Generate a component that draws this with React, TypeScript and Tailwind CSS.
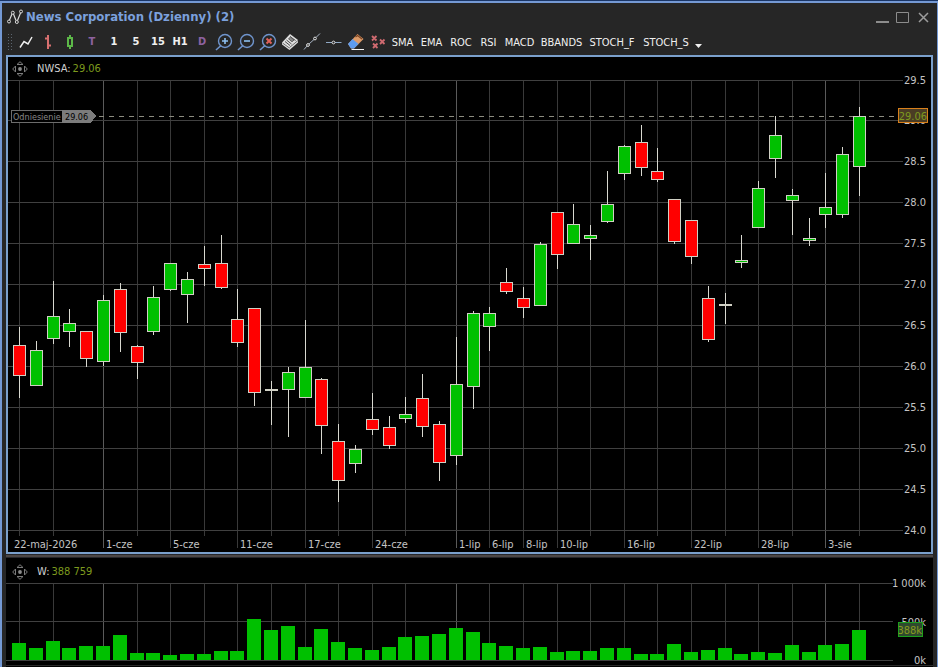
import type { ReactNode } from 'react';

type Dir = 'up' | 'down' | 'flat';
type Candle = [Dir, number, number, number, number];

// direction, high, body top, body bottom, low (screen units, 80 = top grid line)
const candles: Candle[] = [
  ['down', 327, 345, 376, 398],
  ['up', 341, 350, 386, 386],
  ['up', 281, 316, 339, 344],
  ['up', 309, 323, 332, 347],
  ['down', 331, 331, 359, 367],
  ['up', 295, 300, 362, 366],
  ['down', 283, 289, 333, 352],
  ['down', 345, 346, 363, 379],
  ['up', 286, 297, 332, 335],
  ['up', 263, 263, 290, 291],
  ['up', 272, 279, 295, 323],
  ['down', 246, 264, 269, 286],
  ['down', 235, 263, 288, 289],
  ['down', 289, 319, 343, 347],
  ['down', 308, 308, 393, 406],
  ['flat', 381, 389, 391, 425],
  ['up', 367, 372, 390, 437],
  ['up', 320, 367, 398, 398],
  ['down', 378, 379, 426, 454],
  ['down', 424, 441, 481, 502],
  ['up', 445, 449, 464, 473],
  ['down', 393, 419, 430, 435],
  ['down', 416, 427, 446, 449],
  ['up', 397, 414, 419, 423],
  ['down', 374, 398, 427, 437],
  ['down', 421, 424, 463, 481],
  ['up', 337, 384, 456, 465],
  ['up', 311, 313, 387, 409],
  ['up', 307, 313, 327, 351],
  ['down', 268, 282, 292, 294],
  ['down', 287, 298, 308, 318],
  ['up', 242, 244, 306, 306],
  ['down', 212, 212, 255, 269],
  ['up', 204, 224, 244, 244],
  ['up', 225, 235, 239, 260],
  ['up', 171, 204, 222, 223],
  ['up', 145, 146, 174, 180],
  ['down', 125, 142, 168, 176],
  ['down', 148, 171, 180, 182],
  ['down', 199, 199, 242, 244],
  ['down', 220, 220, 257, 264],
  ['down', 286, 298, 340, 342],
  ['flat', 293, 304, 306, 324],
  ['up', 235, 260, 263, 268],
  ['up', 181, 188, 228, 228],
  ['up', 116, 135, 159, 178],
  ['up', 189, 195, 201, 235],
  ['up', 218, 238, 241, 246],
  ['up', 173, 207, 215, 228],
  ['up', 147, 154, 215, 218],
  ['up', 107, 116, 167, 196],
];

const volumes = [
  17, 12, 19, 12, 14, 14, 25, 7, 7, 5, 6, 6, 9, 9, 41, 30, 34, 13, 31, 18, 12, 10, 13, 23, 24, 26,
  32, 28, 17, 14, 12, 13, 8, 9, 9, 12, 12, 6, 6, 16, 8, 10, 12, 6, 8, 7, 15, 8, 15, 16, 30,
];

const TOP = 80;
const PITCH = 16.8;

const gridColumns = [0, 2, 5, 7, 9, 11, 13, 15, 17, 19, 21, 23, 26, 28, 30, 32, 34, 36, 38, 40, 42, 44, 46, 48, 50];
const monthStarts = [5, 26, 48];

const dates: Record<number, string> = {
  5: '1-cze',
  9: '5-cze',
  13: '11-cze',
  17: '17-cze',
  21: '24-cze',
  26: '1-lip',
  28: '6-lip',
  30: '8-lip',
  32: '10-lip',
  36: '16-lip',
  40: '22-lip',
  44: '28-lip',
  48: '3-sie',
};

const priceLines = [
  { y: 0, label: '29.5' },
  { y: 40, label: '29.0' },
  { y: 81, label: '28.5' },
  { y: 122, label: '28.0' },
  { y: 163, label: '27.5' },
  { y: 204, label: '27.0' },
  { y: 245, label: '26.5' },
  { y: 286, label: '26.0' },
  { y: 327, label: '25.5' },
  { y: 368, label: '25.0' },
  { y: 409, label: '24.5' },
  { y: 450, label: '24.0' },
];

const fills: Record<Dir, string> = { up: '#00c000', down: '#ff0000', flat: '#c8c8c8' };

const colX = (i: number, origin: number) => origin + Math.round(PITCH * i);

const gridColor = (i: number) => (monthStarts.includes(i) ? '#5a5a5a' : '#393939');

const Glyph = ({ children }: { children: ReactNode }) => (
  <svg width="18" height="18" viewBox="0 0 18 18" fill="none" aria-hidden="true">
    {children}
  </svg>
);

const Lens = ({ children }: { children: ReactNode }) => (
  <Glyph>
    <path d="M6 12.5 1 17" stroke="#6f94cc" strokeWidth="1.6" />
    <circle cx="10" cy="8" r="6.5" stroke="#6f94cc" strokeWidth="1.4" />
    {children}
  </Glyph>
);

const Letter = ({ text, className }: { text: string; className: string }) => (
  <span className={`text-[11px] font-bold ${className}`}>{text}</span>
);

const tools: { name: string; icon: ReactNode }[] = [
  {
    name: 'Line',
    icon: (
      <Glyph>
        <path d="M3 14.5 7 8.5 11 11 15 4" stroke="#f0f0f0" strokeWidth="1.5" />
      </Glyph>
    ),
  },
  {
    name: 'Bars',
    icon: (
      <Glyph>
        <path d="M9 2v14M6 5.5h3M9 12.5h3" stroke="#d87070" strokeWidth="2" />
      </Glyph>
    ),
  },
  {
    name: 'Candles',
    icon: (
      <Glyph>
        <path d="M9 2v3M9 13v3" stroke="#5cb848" strokeWidth="2" />
        <rect x="7" y="5" width="4" height="8" stroke="#5cb848" strokeWidth="2" />
      </Glyph>
    ),
  },
  { name: 'Tick', icon: <Letter text="T" className="text-[#8d62a0]" /> },
  { name: '1 min', icon: <Letter text="1" className="text-[#f0f0f0]" /> },
  { name: '5 min', icon: <Letter text="5" className="text-[#f0f0f0]" /> },
  { name: '15 min', icon: <Letter text="15" className="text-[#f0f0f0]" /> },
  { name: '1 h', icon: <Letter text="H1" className="text-[#f0f0f0]" /> },
  { name: 'Daily', icon: <Letter text="D" className="text-[#8d62a0]" /> },
  {
    name: 'Zoom in',
    icon: (
      <Lens>
        <path d="M10 5v6M7 8h6" stroke="#8fc0f0" strokeWidth="1.6" />
      </Lens>
    ),
  },
  {
    name: 'Zoom out',
    icon: (
      <Lens>
        <path d="M7 8h6" stroke="#8fc0f0" strokeWidth="1.6" />
      </Lens>
    ),
  },
  {
    name: 'Reset zoom',
    icon: (
      <Lens>
        <path d="m7.5 5.5 5 5M12.5 5.500l-5 5" stroke="#e0605a" strokeWidth="2" />
      </Lens>
    ),
  },
  {
    name: 'News',
    icon: (
      <Glyph>
        <path d="M1 9.5 9 1l8 6v2.5L8.500 17 1 11.500Z" fill="#dedede" />
        <path d="M8.500 14.500 17 7.500M1.500 10l7 5" stroke="#6a6a6a" />
        <path d="M9 3.500 14.500 7.500M4 8.500l5 4M5.500 7l5 4" stroke="#4a4a4a" />
        <path d="m7.500 5.800 2-1.800 3.500 3-2 1.800Z" fill="#8a8a8a" stroke="#4a4a4a" strokeWidth=".8" />
      </Glyph>
    ),
  },
  {
    name: 'Trend line',
    icon: (
      <Glyph>
        <path d="M1 16.5 4 13M6 11l5-4.5M13 4.500l4-4" stroke="#a8b4c4" />
        <circle cx="5" cy="12" r="1.4" stroke="#e0e0e0" />
        <circle cx="12" cy="5.5" r="1.4" stroke="#e0e0e0" />
      </Glyph>
    ),
  },
  {
    name: 'Horizontal line',
    icon: (
      <Glyph>
        <path d="M1 9.5h6M10 9.5h6.5" stroke="#8fa8c4" />
        <circle cx="8.5" cy="9.5" r="1.4" stroke="#e0e0e0" />
      </Glyph>
    ),
  },
  {
    name: 'Eraser',
    icon: (
      <Glyph>
        <path d="M10.500 1 16.500 6 7 15.500 4 15.500 1 11Z" fill="#dc9a68" />
        <path d="M5.500 6 11.500 11 7 15.500H4L1 11Z" fill="#5d9cf0" />
        <path d="m8.500 4 2-1.500L15 6" stroke="#7a4424" strokeWidth="1.2" />
        <path d="M4.500 16.500H17" stroke="#f4f4f4" />
      </Glyph>
    ),
  },
  {
    name: 'Delete all',
    icon: (
      <Glyph>
        <path
          d="m3 3 4.500 4.500M7.500 3 3 7.500M11 6.500l4.500 4.500M15.500 6.500 11 11M4 10.500l4.500 4.500M8.500 10.500 4 15"
          stroke="#cf6a70"
          strokeWidth="1.8"
        />
      </Glyph>
    ),
  },
];

const indicators = [
  { name: 'SMA', width: 'w-[21px]' },
  { name: 'EMA', width: 'w-[21px]' },
  { name: 'ROC', width: 'w-[22px]' },
  { name: 'RSI', width: 'w-[17px]' },
  { name: 'MACD', width: 'w-[29px]' },
  { name: 'BBANDS', width: 'w-[39px]' },
  { name: 'STOCH_F', width: 'w-[46px]' },
  { name: 'STOCH_S', width: 'w-[46px]' },
];

const TitleBar = () => (
  <header className="flex h-[26px] items-center pt-[2px] pr-2 pl-[5px]">
    <svg width="17" height="16" viewBox="0 0 17 16" fill="none" stroke="#d8d8d8" aria-hidden="true">
      <path d="M2.5 11 5 5M6.500 5l2.500 6.500M10.500 11.500 13.500 4" strokeWidth="1.2" />
      <circle cx="2" cy="12.5" r="1.5" />
      <circle cx="5.8" cy="3.7" r="1.5" />
      <circle cx="9.8" cy="13" r="1.5" />
      <circle cx="14" cy="2.5" r="1.5" />
    </svg>
    <h1 className="ml-[2px] flex-1 whitespace-nowrap text-[13px] leading-4 font-bold text-[#7ba0dc]">
      News Corporation (Dzienny) (2)
    </h1>
    <div className="flex gap-[7px]">
      <button type="button" aria-label="Minimize">
        <svg width="13" height="13" fill="none" stroke="#8c8c8c" strokeWidth="2">
          <path d="M0 11h13" />
        </svg>
      </button>
      <button type="button" aria-label="Maximize">
        <svg width="13" height="13" fill="none" stroke="#8c8c8c">
          <path d="M.5 1.500h12v10H.5z" />
        </svg>
      </button>
      <button type="button" aria-label="Close" className="ml-[2px]">
        <svg width="11" height="13" fill="none" stroke="#9c9c9c" strokeWidth="1.5">
          <path d="m1 2 9 9M10 2l-9 9" />
        </svg>
      </button>
    </div>
  </header>
);

const Toolbar = () => (
  <div className="flex h-[26px] items-center pl-[5px]">
    <svg width="8" height="18" aria-hidden="true">
      {[2, 5, 8, 11, 14, 17].map((y) => (
        <g key={y} fill="#5c6670">
          <rect x="1" y={y - 1} width="1" height="1" />
          <rect x="4" y={y - 1} width="1" height="1" />
        </g>
      ))}
    </svg>
    {tools.map((tool) => (
      <button
        key={tool.name}
        type="button"
        aria-label={tool.name}
        className="flex h-[22px] w-[22px] shrink-0 items-center justify-center"
      >
        {tool.icon}
      </button>
    ))}
    <div className="ml-[3px] flex gap-2 pt-[2px]">
      {indicators.map((item) => (
        <button
          key={item.name}
          type="button"
          className={`flex justify-center whitespace-nowrap text-[11px] text-[#f0f0f0] ${item.width}`}
        >
          {item.name}
        </button>
      ))}
    </div>
    <button type="button" aria-label="More indicators" className="ml-[6px] pt-2">
      <svg width="7" height="4" fill="#f0f0f0">
        <path d="M0 0h7L3.500 4z" />
      </svg>
    </button>
  </div>
);

const PanelHeader = ({ label, value }: { label: string; value: string }) => (
  <>
    <svg width="16" height="16" viewBox="0 0 16 16" fill="none" stroke="#7c7c7c" aria-hidden="true">
      <path d="M5 3.500 8 .7l3 2.800ZM5 12.500l3 2.800 3-2.800ZM3.500 5 .7 8l2.800 3ZM12.500 5l2.800 3-2.800 3Z" />
      <circle cx="8" cy="8" r="1.9" fill="#8c8c8c" stroke="none" />
    </svg>
    <span className="ml-[9px] text-[#d0d0d0]">{label}</span>
    <span className="ml-[2px] text-[#7d9a1e]">{value}</span>
  </>
);

const PriceChart = () => (
  <section className="border-2 border-[#7ba0cc] bg-black">
    <div className="flex h-[23px] items-center pt-px pl-1">
      <PanelHeader label="NWSA:" value="29.06" />
    </div>
    <svg className="block w-full overflow-visible" height="472" fontSize="11" shapeRendering="crispEdges">
      {gridColumns.map((i) => (
        <rect key={i} x={colX(i, 11)} y="0" width="1" height={dates[i] ? 468 : 456} fill={gridColor(i)} />
      ))}
      {/* price grid stops short of the scale */}
      <svg x="-28" width="100%" height="472" overflow="hidden">
        {priceLines.map((line) => (
          <rect key={line.label} x="28" y={line.y} width="100%" height="1" fill="#404040" />
        ))}
        <line x1="119" y1="36.5" x2="100%" y2="36.5" stroke="#8c8c80" strokeDasharray="5 5" />
      </svg>

      {candles.map(([dir, high, top, bottom, low], i) => {
        const x = colX(i, 11);
        return (
          <g key={i}>
            <rect x={x} y={high - TOP} width="1" height={low - high} fill="#d8d8d0" />
            <rect x={x - 6} y={top - TOP} width="13" height={bottom - top} fill="#d0d0c4" />
            <rect x={x - 5} y={top - TOP + 1} width="11" height={bottom - top - 2} fill={fills[dir]} />
          </g>
        );
      })}

      <g fill="#c4c4c4">
        <text x="6" y="468">22-maj-2026</text>
        {Object.entries(dates).map(([i, label]) => (
          <text key={label} x={colX(Number(i), 11) + 3} y="468">
            {label}
          </text>
        ))}
      </g>

      <rect x="3.5" y="30.5" width="51" height="12" fill="#000000" stroke="#6c6c6c" />
      <path d="M54 30h29l5 6-5 7H54z" fill="#7c7c7c" />
      <text x="5" y="40" fontSize="9" fill="#888888">Odniesienie</text>
      <text x="57" y="40" fontSize="9" fill="#000000">29.06</text>

      <svg x="100%" overflow="visible">
        <g fill="#c4c4c4" textAnchor="end">
          {priceLines.map((line) => (
            <text key={line.label} x="-5" y={line.y + 4}>
              {line.label}
            </text>
          ))}
        </g>
        <rect x="-32.5" y="28.5" width="29" height="14" fill="#4a3c24" stroke="#d8801c" />
        <text x="-4" y="40" textAnchor="end" fill="#7d9a1e">29.06</text>
      </svg>
    </svg>
  </section>
);

const VolumeChart = () => (
  <section className="bg-black">
    <div className="flex h-[25px] items-center pt-[3px] pl-[6px]">
      <PanelHeader label="W:" value="388 759" />
    </div>
    <svg className="block w-full overflow-visible" height="84" fontSize="11" shapeRendering="crispEdges">
      {gridColumns.map((i) => (
        <rect key={i} x={colX(i, 13)} y="0" width="1" height="77" fill={gridColor(i)} />
      ))}
      <svg x="-40" width="100%" height="84" overflow="hidden">
        <rect x="40" y="0" width="100%" height="1" fill="#404040" />
        <rect x="40" y="38" width="100%" height="1" fill="#404040" />
        <rect x="40" y="77" width="100%" height="1" fill="#404040" />
      </svg>
      {volumes.map((v, i) => (
        <rect key={i} x={colX(i, 13) - 7} y={77 - v} width="14" height={v} fill="#00c000" />
      ))}
      <rect y="82" width="100%" height="1" fill="#2a2a2a" />
      <svg x="100%" overflow="visible">
        <g fill="#c4c4c4" textAnchor="end">
          <text x="-7" y="4">1 000k</text>
          <text x="-7" y="43">500k</text>
          <text x="-7" y="81">0k</text>
        </g>
        <rect x="-34.5" y="39.5" width="24" height="14" fill="#2e4a2e" stroke="#1ca01c" />
        <text x="-11" y="51" textAnchor="end" fill="#8a9a1e">388k</text>
      </svg>
    </svg>
  </section>
);

export default function App() {
  return (
    <div className="flex min-h-screen flex-col overflow-hidden bg-[#262626] font-['DejaVu_Sans_Condensed','DejaVu_Sans',sans-serif] text-[11px] leading-[14px]">
      <div className="h-px bg-[#1a3566]" />
      <main className="flex-1 border-t-2 border-r border-l-2 border-[#7499d4]">
        <TitleBar />
        <Toolbar />
        <div className="mx-1">
          <PriceChart />
          <div className="h-1 border-y border-[#26262a] bg-[#4c4644]" />
          <VolumeChart />
        </div>
      </main>
    </div>
  );
}
